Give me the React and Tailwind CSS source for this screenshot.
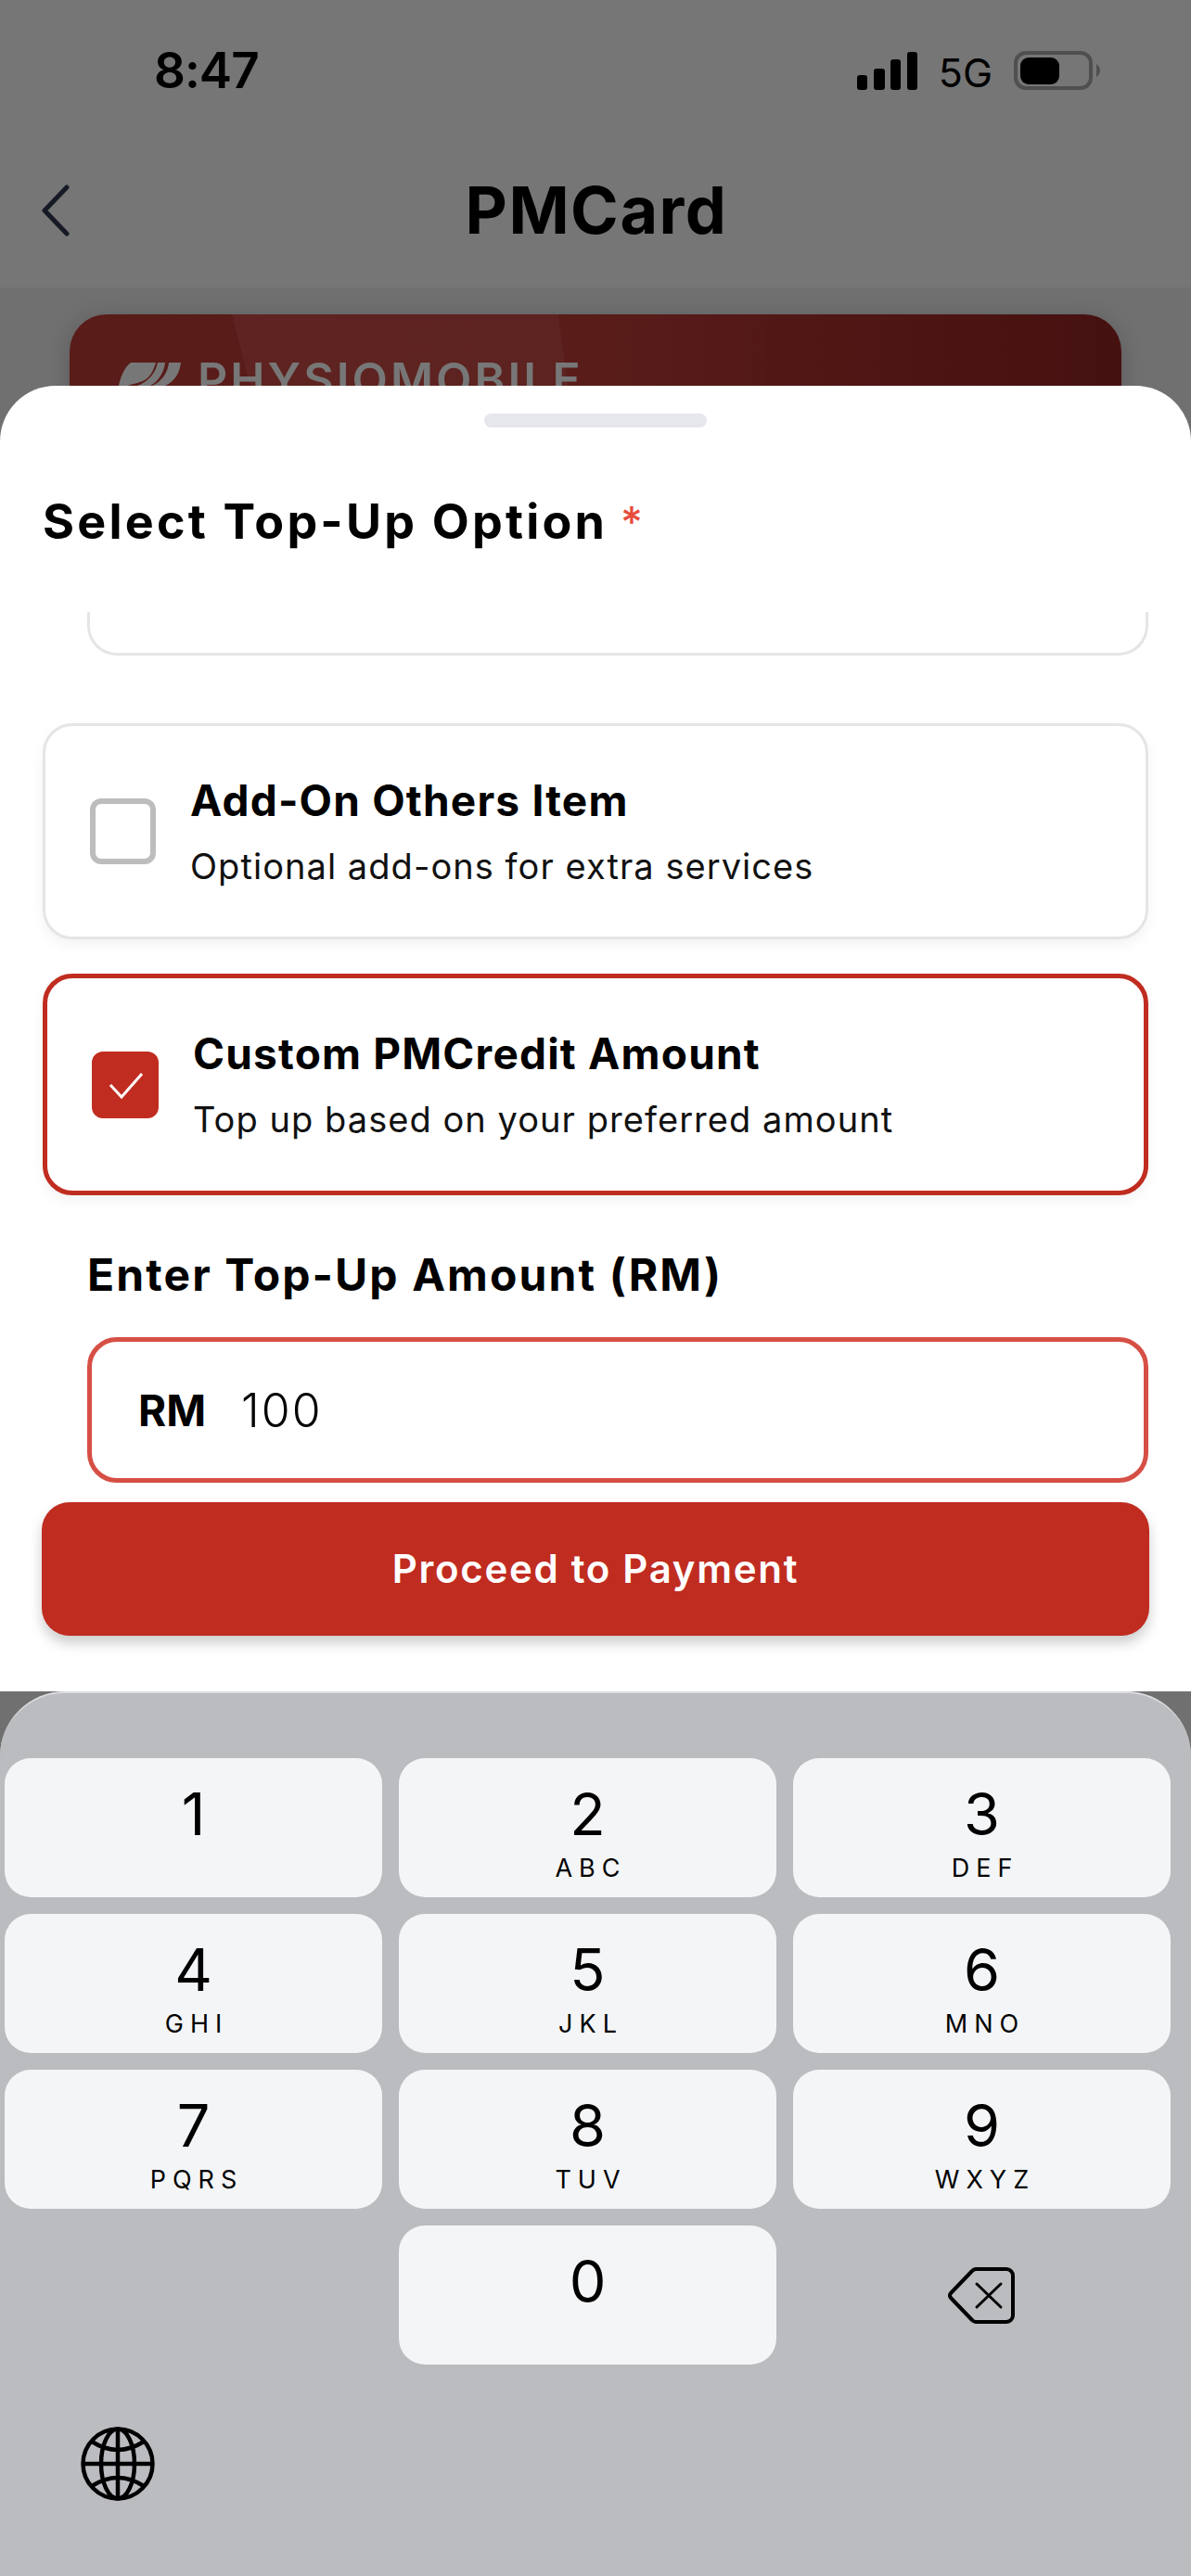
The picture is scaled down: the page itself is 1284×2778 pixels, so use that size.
const keys = [
  ["1", ""],
  ["2", "ABC"],
  ["3", "DEF"],
  ["4", "GHI"],
  ["5", "JKL"],
  ["6", "MNO"],
  ["7", "PQRS"],
  ["8", "TUV"],
  ["9", "WXYZ"],
];

function Key({ digit, letters }) {
  return (
    <div className="h-[150px] rounded-[28px] bg-[#f4f5f7] flex flex-col items-center text-black">
      <div className="mt-[22px] text-[63px] leading-[76px] font-normal">{digit}</div>
      <div className="mt-[6px] text-[27px] leading-[30px] font-normal tracking-[7px] pl-[7px]">{letters}</div>
    </div>
  );
}

function Signal() {
  return (
    <svg width="65" height="41" viewBox="0 0 65 41" fill="#000">
      <rect x="0" y="25" width="11" height="16" rx="3" />
      <rect x="18" y="18" width="12" height="23" rx="3" />
      <rect x="36" y="8" width="11" height="33" rx="3" />
      <rect x="54" y="0" width="11" height="41" rx="3" />
    </svg>
  );
}

function Battery() {
  return (
    <svg width="93" height="42" viewBox="0 0 93 42">
      <rect x="2" y="2" width="81" height="38" rx="11" fill="none" stroke="#4f4f4f" strokeWidth="4" />
      <rect x="7" y="7" width="42" height="29" rx="9" fill="#000" />
      <path d="M89 14 Q93 17 93 21 Q93 25 89 28 Z" fill="#4f4f4f" />
    </svg>
  );
}

function CheckRow({ checked, title, desc }) {
  return (
    <div
      className={
        checked
          ? "h-[239px] rounded-[32px] border-[5px] border-[#c02c20] bg-white pl-[48px] flex items-center gap-[37px] shadow-[0_6px_14px_rgba(0,0,0,0.05)]"
          : "h-[233px] rounded-[32px] border-[3px] border-[#e5e5e5] bg-white pl-[48px] flex items-center gap-[37px] shadow-[0_6px_14px_rgba(0,0,0,0.05)]"
      }
    >
      {checked ? (
        <div className="w-[72px] h-[72px] rounded-[12px] bg-[#c02c20] flex items-center justify-center">
          <svg width="72" height="72" viewBox="0 0 72 72" fill="none" stroke="#fff" strokeWidth="3">
            <path d="M20 36 L32 49 L54 24" />
          </svg>
        </div>
      ) : (
        <div className="w-[71px] h-[71px] rounded-[12px] border-[6px] border-[#bdbdbd] bg-white" />
      )}
      <div>
        <div className="text-[46px] leading-[56px] font-bold tracking-[1.2px] text-black">{title}</div>
        <div className="mt-[18px] text-[38px] leading-[50px] tracking-[1.05px] text-[#111]">{desc}</div>
      </div>
    </div>
  );
}

export default function App() {
  return (
    <div className="relative w-[1284px] h-[2778px] overflow-hidden bg-[#707070] font-['Inter',sans-serif]">
      {/* SCREEN BEHIND THE SHEET */}
      <div className="h-[310px] bg-[#767676] pt-[46px]">
        <div className="h-[60px] flex items-center justify-between pl-[166px] pr-[98px]">
          <div className="text-[53px] leading-[60px] font-semibold tracking-[-1px] text-black">8:47</div>
          <div className="flex items-center">
            <Signal />
            <div className="ml-[23px] text-[43px] leading-[50px] text-black pt-[3px]">5G</div>
            <div className="ml-[23px]">
              <Battery />
            </div>
          </div>
        </div>
        <div className="mt-[81px] h-[60px] grid grid-cols-[1fr_auto_1fr] items-center pl-[45px]">
          <svg width="30" height="56" viewBox="0 0 30 56" fill="none" stroke="#161a26" strokeWidth="5" strokeLinecap="round" strokeLinejoin="round">
            <path d="M27 3 L3 28 L27 53" />
          </svg>
          <h1 className="text-[70px] leading-[80px] font-bold tracking-[1.5px] text-black -ml-[43px]">PMCard</h1>
        </div>
      </div>

      <div className="mt-[29px] mx-[75px] h-[300px] rounded-[40px] relative overflow-hidden bg-gradient-to-r from-[#5a1c19] via-[#581b18] to-[#451110] shadow-[0_4px_24px_rgba(0,0,0,0.2)] pl-[52px] pt-[42px]">
        <svg className="absolute top-0 left-0" width="780" height="300" viewBox="0 0 780 300">
          <path d="M175 0 C183 30 190 60 198 90 L540 90 C535 60 530 30 527 0 Z" fill="#ffffff" fillOpacity="0.035" />
          <path d="M527 0 L752 0 L750 300 L540 300 Z" fill="#ffffff" fillOpacity="0.008" />
        </svg>
        <div className="relative flex items-start gap-[18px]">
          <svg width="68" height="40" viewBox="0 0 68 40" fill="#777777" className="mt-[10px]">
            <path d="M14 0 H41 C38 10 34 18 24 21 C16 24 8 24 0 30 C2 18 6 6 14 0 Z" />
            <path d="M43 0 H51 C50 10 44 20 35 25 H21 C34 20 41 10 43 0 Z" />
            <path d="M55 0 H68 C67 10 62 20 51 25 H37 C48 20 54 10 55 0 Z" />
          </svg>
          <div className="text-[50px] leading-[56px] font-semibold tracking-[3px] text-[#777777]">PHYSIOMOBILE</div>
        </div>
      </div>

      {/* BOTTOM SHEET AND KEYBOARD */}
      <div className="absolute inset-x-0 top-[416px] flex flex-col">
        <div className="h-[1408px] bg-white rounded-t-[60px] flex flex-col">
          <div className="mt-[30px] mx-auto w-[240px] h-[15px] rounded-full bg-[#e5e7eb]" />

          <div className="mt-[72px] pl-[46px] h-[60px] flex items-start">
            <h2 className="text-[52px] leading-[60px] font-bold tracking-[3.2px] text-black">Select Top-Up Option</h2>
            <span className="ml-[14px] text-[46px] leading-[60px] font-medium text-[#e74c3c]">*</span>
          </div>

          {/* scrolled list, the first card is cut off at the top */}
          <div className="mt-[67px] ml-[94px] mr-[46px] h-[47px] rounded-b-[32px] border-x-[3px] border-b-[3px] border-[#e5e5e5]" />

          <div className="mt-[73px] mx-[46px]">
            <CheckRow title="Add-On Others Item" desc="Optional add-ons for extra services" />
          </div>
          <div className="mt-[37px] mx-[46px]">
            <CheckRow checked title="Custom PMCredit Amount" desc="Top up based on your preferred amount" />
          </div>

          <div className="mt-[56px] ml-[94px] text-[48px] leading-[60px] font-bold tracking-[2.1px] text-black">
            Enter Top-Up Amount (RM)
          </div>

          <div className="mt-[37px] ml-[94px] mr-[46px] h-[157px] rounded-[32px] border-[5px] border-[#d64f45] bg-white flex items-center pl-[50px]">
            <span className="text-[46px] leading-[56px] font-bold text-black">RM</span>
            <span className="ml-[38px] text-[50px] leading-[56px] tracking-[2px] font-light text-black">100</span>
          </div>

          <div className="mt-[21px] mx-[45px] h-[144px] rounded-[30px] bg-[#c02c20] flex items-center justify-center shadow-[0_8px_14px_rgba(0,0,0,0.2)]">
            <span className="text-[42px] leading-[50px] font-semibold tracking-[1.7px] text-white">Proceed to Payment</span>
          </div>
        </div>

        <div className="h-[954px] rounded-t-[70px] bg-[#bbbcc0] border-t-[2px] border-[#dcdde0] pt-[70px] pl-[5px] pr-[22px]">
          <div className="grid grid-cols-3 gap-[18px]">
            {keys.map(([digit, letters]) => (
              <Key key={digit} digit={digit} letters={letters} />
            ))}
            <div />
            <Key digit="0" letters="" />
            <div className="flex items-center justify-center">
              <svg width="73" height="61" viewBox="0 0 73 61" fill="none" stroke="#000" strokeWidth="4" strokeLinejoin="round">
                <path d="M30 2 H63 a7 7 0 0 1 7 7 V52 a7 7 0 0 1 -7 7 H30 a6 6 0 0 1 -4 -2 L3 33 a4 4 0 0 1 0 -5 L26 4 a6 6 0 0 1 4 -2 Z" />
                <path d="M31 18 L57 43 M57 18 L31 43" strokeWidth="3" strokeLinecap="round" />
              </svg>
            </div>
          </div>

          <div className="mt-[67px] ml-[82px]">
            <svg width="80" height="80" viewBox="0 0 80 80" fill="none" stroke="#000" strokeWidth="4.5">
              <circle cx="40" cy="40" r="37.5" />
              <ellipse cx="40" cy="40" rx="18" ry="37.5" />
              <path d="M40 2 V78 M2 40 H78" />
              <path d="M12 16 Q40 34 68 16 M12 64 Q40 46 68 64" />
            </svg>
          </div>
        </div>
      </div>
    </div>
  );
}
